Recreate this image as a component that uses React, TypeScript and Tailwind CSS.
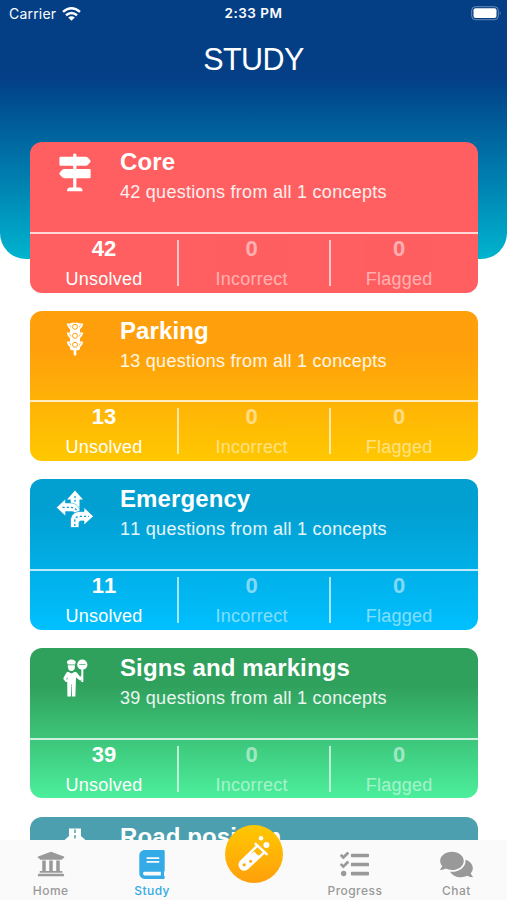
import React from "react";
import { FaBook, FaComments, FaTasks, FaUniversity } from "react-icons/fa";

const SignpostIcon = () => (
  <svg viewBox="0 0 32 39" className="w-[32px] h-[39px]" fill="currentColor">
    <path d="M14.2 1.2 Q15.8 -0.4 17.4 1.2 V35 H14.2 Z" />
    <path d="M1.6 3.7 H26.6 Q28 3.7 29 4.8 L31.4 7.4 Q31.9 8.2 31.4 9 L29 11.7 Q28 12.8 26.6 12.8 H1.6 Q0.4 12.8 0.4 11.6 V4.9 Q0.4 3.7 1.6 3.7 Z" />
    <path d="M30.4 16 H5.4 Q4 16 3 17.1 L0.6 19.8 Q0.1 20.6 0.6 21.4 L3 24.1 Q4 25.2 5.4 25.2 H30.4 Q31.6 25.2 31.6 24 V17.2 Q31.6 16 30.4 16 Z" />
    <path d="M11 34.6 H20.6 Q23.4 34.8 23.6 38.2 H8 Q8.2 34.8 11 34.6 Z" />
  </svg>
);

const TrafficLightIcon = () => (
  <svg viewBox="0 0 18 34" className="w-[18px] h-[34px]" fill="currentColor">
    <rect x="4" y="0.8" width="10" height="27.4" rx="2" />
    {[1.4, 10.4, 19.4].map((y) => (
      <g key={y}>
        <path d={`M0.8 ${y} H5 V${y + 6.2} Q1.6 ${y + 4.6} 0.8 ${y} Z`} />
        <path d={`M17.2 ${y} H13 V${y + 6.2} Q16.4 ${y + 4.6} 17.2 ${y} Z`} />
        <circle
          cx="9"
          cy={y + 3.4}
          r="2.5"
          fill="none"
          stroke="#ffa30a"
          strokeWidth="1"
        />
        <path
          d={`M3.4 ${y + 1.4} L5 ${y + 4} M14.6 ${y + 1.4} L13 ${y + 4}`}
          stroke="#ffa30a"
          strokeWidth="0.7"
        />
      </g>
    ))}
    <rect x="7.7" y="27" width="2.6" height="6.5" rx="0.8" />
  </svg>
);

const RoadArrowsIcon = () => (
  <svg viewBox="0 0 38 38" className="w-[38px] h-[38px]" fill="currentColor">
    <path d="M19 0.5 L27 9.5 H23.5 V20 H14.7 V9.5 H11 Z" />
    <path
      d="M0.5 17.5 L9.5 9 V13 H14 C20 13 23.5 16.5 24 21.5 L19 23.5 C18 21.5 16.5 21.5 14.5 21.5 H9.5 V26 Z"
      stroke="#03a1d4"
      strokeWidth="0.5"
    />
    <path
      d="M14.5 37.5 V31 C14.5 25 18.5 21.5 24 21.5 H28 V17.5 L37.5 26.3 L28 35 V31 H25 C23.5 31 23 32 23 33.5 V37.5 Z"
      stroke="#03a1d4"
      strokeWidth="0.7"
    />
    <g fill="none" stroke="#03a1d4" strokeWidth="1.3">
      <path d="M19 6 V12" strokeDasharray="2 1.8" />
      <path d="M6.5 17.3 H14 Q18.5 17.3 20.5 20" strokeDasharray="2.2 2" />
      <path d="M18.8 36 V31 Q19 26.3 24 26.3 H33" strokeDasharray="2.2 2" />
    </g>
  </svg>
);

const OfficerIcon = () => (
  <svg viewBox="0 0 25 38" className="w-[25px] h-[38px]" fill="currentColor">
    <path d="M3.8 3 Q4.8 0.4 8.3 0.4 Q12 0.4 12.8 3 L12 5.4 H4.9 Z" />
    <path d="M4.8 6.2 H12 V8 Q11.5 12 8.4 12 Q5.4 12 4.8 8 Z" />
    <path d="M5 12.8 L8.5 14.6 L12 12.8 Q14 13 15 15 L17.3 18 L18 16.5 L20 18 L18 21.3 Q17 21.8 16 20.8 L13 18.4 L12.4 37.5 H9 L8.7 25 H8.3 L8 37.5 H4.4 L4.2 21 L4.6 18 L3.4 19.8 L4.6 22.2 L3 23.2 L0.5 20.2 Q0.2 19.3 0.8 18.3 L3 14.3 Q3.8 13 5 12.8 Z" />
    <circle cx="19.3" cy="5.7" r="5.1" />
    <path d="M18.3 10 H20.3 V23 H18.3 Z" />
    <path
      d="M16.2 5.5 H22.4"
      stroke="#31a45f"
      strokeWidth="1.2"
      strokeOpacity="0.7"
    />
  </svg>
);

const RoadIcon = () => (
  <svg viewBox="0 0 24 34" className="w-[24px] h-[34px]" fill="currentColor">
    <path d="M6 0.5 H18 V8 L23.5 13 V33 H0.5 V13 L6 8 Z" />
    <path
      d="M12 1.5 V14"
      stroke="#4c9faf"
      strokeWidth="1.5"
      strokeDasharray="3.5 2"
    />
  </svg>
);

const TestTubeIcon = () => (
  <svg viewBox="0 0 34 38" className="w-[34px] h-[38px]" fill="none">
    <g stroke="white" strokeWidth="2.5" strokeLinecap="round">
      <path d="M18.6 8.8 L29.6 19.2" />
      <path
        d="M20.2 10.8 L4 26.6 Q1.4 30 4.2 33.2 Q7.4 36 10.8 32.8 L27 17.6"
        strokeLinejoin="round"
      />
    </g>
    <path
      d="M12.4 19 Q15.5 18.6 17.5 16.6 Q19 19.4 22.6 21.2 L10.6 32.8 Q7.2 35.4 4.4 32.8 Q2 30 4.4 26.6 Z"
      fill="white"
    />
    <circle cx="7.2" cy="29.8" r="1.6" fill="#ffa909" />
    <circle cx="13.6" cy="26.2" r="1.5" fill="#ffa909" />
    <circle cx="24" cy="3.2" r="2.3" fill="white" />
    <circle cx="29.4" cy="10" r="3" fill="white" />
  </svg>
);

const WifiIcon = () => (
  <svg viewBox="0 0 19 14" className="w-[19px] h-[14px]" fill="none">
    <g stroke="white" strokeWidth="2.5">
      <path d="M1 4.9 Q9.5 -2.3 18 4.9" />
      <path d="M4 8.3 Q9.5 3.6 15 8.3" />
    </g>
    <path d="M6.2 10.5 Q9.5 7.9 12.8 10.5 L9.5 13.8 Z" fill="white" />
  </svg>
);

const BatteryIcon = () => (
  <svg viewBox="0 0 31 15" className="w-[31px] h-[15px]">
    <rect
      x="0.7"
      y="0.7"
      width="26.6"
      height="13"
      rx="3.8"
      fill="none"
      stroke="white"
      strokeOpacity="0.4"
    />
    <rect x="2.5" y="2.3" width="23" height="9.8" rx="2" fill="white" />
    <path d="M28.8 5 Q30.6 7.2 28.8 9.4 Z" fill="white" fillOpacity="0.5" />
  </svg>
);

type Topic = {
  title: string;
  count?: number;
  background: string;
  icon: React.ReactNode;
};

const topics: Topic[] = [
  {
    title: "Core",
    count: 42,
    background: "bg-[#ff5f60]",
    icon: <SignpostIcon />,
  },
  {
    title: "Parking",
    count: 13,
    background: "bg-linear-to-b from-[#ff9f0b] from-25% to-[#ffc800]",
    icon: <TrafficLightIcon />,
  },
  {
    title: "Emergency",
    count: 11,
    background: "bg-linear-to-b from-[#029fd1] from-20% to-[#00c0ff]",
    icon: <RoadArrowsIcon />,
  },
  {
    title: "Signs and markings",
    count: 39,
    background: "bg-linear-to-b from-[#30a15d] from-25% to-[#4cef9c]",
    icon: <OfficerIcon />,
  },
  {
    title: "Road position",
    background: "bg-[#4c9faf]",
    icon: <RoadIcon />,
  },
];

const Stat = ({
  value,
  label,
  className,
}: {
  value: number;
  label: string;
  className: string;
}) => (
  <div className={`flex flex-col items-center ${className}`}>
    <span className="text-[22px] leading-6 font-bold">{value}</span>
    <span className="mt-[7px] text-[18px] leading-[22px] tracking-[0.25px]">
      {label}
    </span>
  </div>
);

const Divider = () => (
  <div className="w-[2px] -mx-px h-[46px] mt-[3px] bg-white/65 shrink-0" />
);

const TopicCard = ({ topic }: { topic: Topic }) => (
  <section
    className={`h-[150.4px] shrink-0 rounded-[12px] overflow-hidden text-white [font-kerning:none] ${topic.background}`}
  >
    <div className="flex h-[89.5px]">
      <div className="w-[90px] pt-[11px] flex justify-center items-start">
        {topic.icon}
      </div>
      <div className="pt-[6px]">
        <h2 className="text-[24px] leading-7 font-bold tracking-[0.1px]">
          {topic.title}
        </h2>
        {topic.count !== undefined && (
          <p className="mt-[5px] text-[18px] leading-[22px] tracking-[0.27px] text-white/90">
            {topic.count} questions from all 1 concepts
          </p>
        )}
      </div>
    </div>
    {topic.count !== undefined && (
      <>
        <div className="h-[2px] bg-white/75" />
        <div className="flex pt-[3px]">
          <Stat value={topic.count} label="Unsolved" className="w-[148px]" />
          <Divider />
          <Stat
            value={0}
            label="Incorrect"
            className="w-[152px] pr-[4px] opacity-50"
          />
          <Divider />
          <Stat
            value={0}
            label="Flagged"
            className="w-[148px] pr-[9px] opacity-50"
          />
        </div>
      </>
    )}
  </section>
);

const Tab = ({
  label,
  active,
  children,
}: {
  label: string;
  active?: boolean;
  children: React.ReactNode;
}) => (
  <button
    className={`flex-1 flex flex-col items-center pt-[9px] ${active ? "text-[#34aae6]" : "text-[#999999]"}`}
  >
    <span className="h-[30px] flex items-center">{children}</span>
    <span className="mt-[4px] text-[12px] leading-4 font-medium tracking-[0.45px]">
      {label}
    </span>
  </button>
);

export default function App() {
  return (
    <div className="relative w-[507px] h-[900px] overflow-hidden bg-white flex flex-col font-['Liberation_Sans',sans-serif]">
      <div className="absolute inset-x-0 top-0 h-[259px] rounded-b-[26px] bg-linear-to-b from-[#043f86] from-30% to-[#00b4cf]" />

      <header className="relative h-[142.3px] shrink-0 text-white">
        <div className="grid grid-cols-3 items-center h-[27px] px-[9px] text-[14px] font-['Inter',sans-serif]">
          <div className="flex items-center gap-[6px]">
            <span className="tracking-[0.2px]">Carrier</span>
            <WifiIcon />
          </div>
          <span className="text-center font-semibold text-[13.5px] tracking-[0.5px]">
            2:33 PM
          </span>
          <div className="flex justify-end -mr-1">
            <BatteryIcon />
          </div>
        </div>
        <h1 className="mt-[14px] text-center text-[30.5px] leading-9 tracking-[-0.6px] [font-kerning:none]">
          STUDY
        </h1>
      </header>

      <main className="relative flex-1 min-h-0 overflow-hidden flex flex-col gap-[18.2px] pl-[30px] pr-[29.5px]">
        {topics.map((topic) => (
          <TopicCard key={topic.title} topic={topic} />
        ))}
      </main>

      <nav className="relative h-[60px] shrink-0 flex bg-[#fafafa] font-['Inter',sans-serif]">
        <Tab label="Home">
          <FaUniversity className="w-[28px] h-[28px]" />
        </Tab>
        <Tab label="Study" active>
          <FaBook className="w-[26px] h-[29px]" />
        </Tab>
        <div className="flex-1 flex justify-center">
          <button className="-mt-[15px] w-[58px] h-[58px] rounded-full flex items-center justify-center bg-linear-to-t from-[#ff9f0b] to-[#ffc800]">
            <TestTubeIcon />
          </button>
        </div>
        <Tab label="Progress">
          <FaTasks className="w-[29px] h-[29px]" />
        </Tab>
        <Tab label="Chat">
          <FaComments className="w-[33px] h-[29px]" />
        </Tab>
      </nav>
    </div>
  );
}
